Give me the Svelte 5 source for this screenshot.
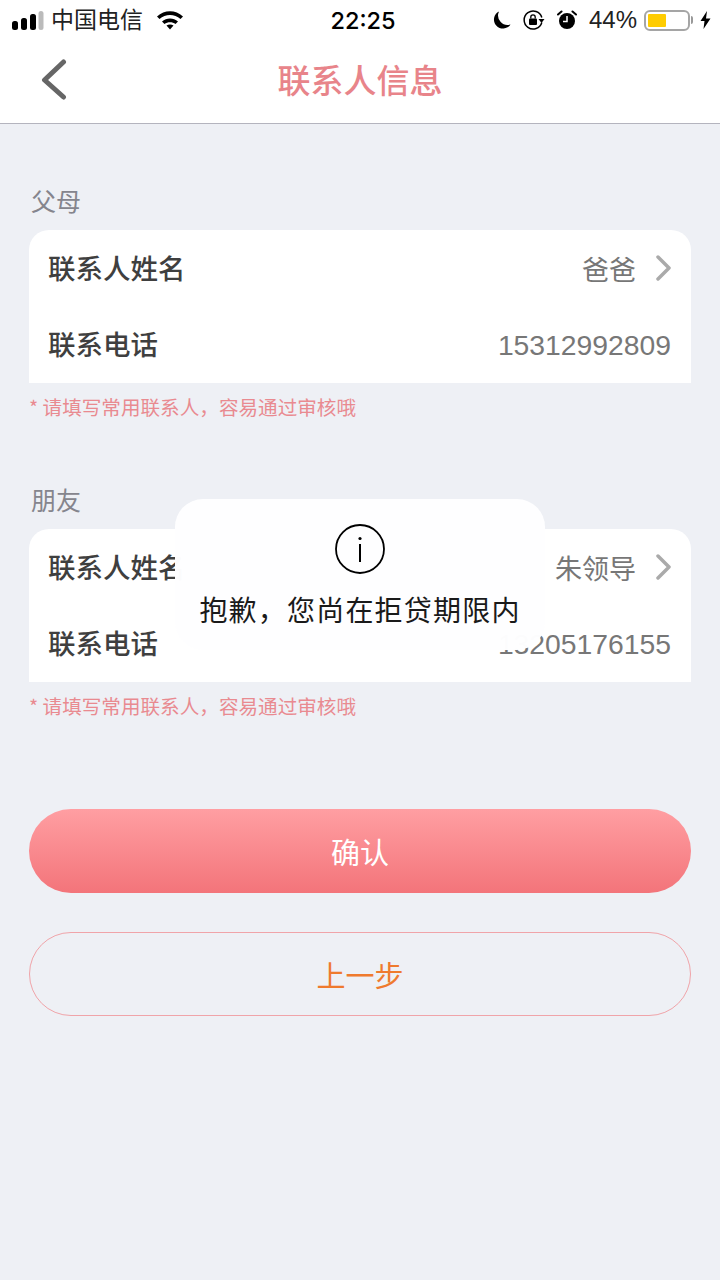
<script>
	const groups = [
		{ title: '父母', name: '爸爸', phone: '15312992809' },
		{ title: '朋友', name: '朱领导', phone: '13205176155' }
	];
</script>

<div class="page">
	<header class="status">
		<div class="side">
			<svg class="signal" width="32" height="19" viewBox="0 0 32 19">
				<rect x="0" y="10" width="6" height="9" rx="2.500" fill="#000" />
				<rect x="9" y="7" width="6" height="12" rx="2.500" fill="#000" />
				<rect x="18" y="3" width="6" height="16" rx="2.500" fill="#000" />
				<rect x="26.500" y="0" width="5" height="19" rx="2.500" fill="#bbb" />
			</svg>
			<span class="carrier">中国电信</span>
			<svg class="wifi" width="28" height="20" viewBox="0 0 28 20">
				<path d="M1 6.500C8.500 -0.500 19.500 -0.500 27 6.500L24.500 9C18.500 3.500 9.500 3.500 3.500 9Z" fill="#000" />
				<path d="M6 11.500C10.500 7.500 17.500 7.500 22 11.500L19.500 14C16.500 11.500 11.500 11.500 8.500 14Z" fill="#000" />
				<path d="M10.500 15.500C12.500 14 15.500 14 17.500 15.500L14 19.500Z" fill="#000" />
			</svg>
		</div>
		<span class="clock">22:25</span>
		<div class="side right">
			<svg width="19" height="19" viewBox="0 0 19 19">
				<path d="M7 0.500A9 9 0 1 0 18.500 13.500A9.500 9.500 0 0 1 7 0.500Z" fill="#000" />
			</svg>
			<svg class="lock" width="22" height="20" viewBox="0 0 22 20">
				<path d="M18.800 7.500A9 9 0 1 0 18.800 12.500" fill="none" stroke="#000" stroke-width="1.500" />
				<path d="M15.500 9L21.500 9L18.500 13Z" fill="#000" />
				<rect x="6" y="8.500" width="8" height="6.500" rx="1" fill="#000" />
				<path d="M7.800 8.500V7A2.200 2.200 0 0 1 12.200 7V8.500" fill="none" stroke="#000" stroke-width="1.300" />
			</svg>
			<svg class="alarm" width="20" height="20" viewBox="0 0 20 20">
				<circle cx="10" cy="11" r="8" fill="#000" />
				<path d="M1 4.500L4.500 1.500M19 4.500L15.500 1.500" stroke="#000" stroke-width="2" stroke-linecap="round" />
				<path d="M10 6V11.500H6" fill="none" stroke="#fff" stroke-width="1.500" />
			</svg>
			<span class="percent">44%</span>
			<div class="battery"><div class="level"></div></div>
			<span class="nub"></span>
			<svg class="bolt" width="11" height="18" viewBox="0 0 11 18">
				<path d="M7 0L0.500 10H4.500L3.500 18L10.500 7.500H6Z" fill="#000" />
			</svg>
		</div>
	</header>

	<nav class="nav">
		<svg class="back" width="28" height="42" viewBox="0 0 28 42">
			<path d="M23.500 3L4.500 21L23.500 38" fill="none" stroke="#666" stroke-width="5" stroke-linecap="round" stroke-linejoin="round" />
		</svg>
		<h1>联系人信息</h1>
	</nav>

	<main class="content">
		{#each groups as group}
			<section class="group">
				<div class="label">{group.title}</div>
				<div class="card">
					<div class="row">
						<span class="key">联系人姓名</span>
						<span class="value">{group.name}</span>
						<svg class="chevron" width="15" height="26" viewBox="0 0 15 26">
							<path d="M2 2L13 13L2 24" fill="none" stroke="#aaa" stroke-width="3.500" stroke-linecap="round" stroke-linejoin="round" />
						</svg>
					</div>
					<div class="row">
						<span class="key">联系电话</span>
						<span class="value digits">{group.phone}</span>
					</div>
				</div>
				<p class="hint">* 请填写常用联系人，容易通过审核哦</p>
			</section>
		{/each}

		<button class="btn primary">确认</button>
		<button class="btn ghost">上一步</button>
	</main>

	<div class="toast">
		<svg width="50" height="50" viewBox="0 0 50 50">
			<circle cx="25" cy="25" r="24" fill="none" stroke="#000" stroke-width="1.800" />
			<circle cx="25" cy="14.500" r="1.600" fill="#000" />
			<path d="M25 20V38" stroke="#000" stroke-width="2" />
		</svg>
		<div class="toast-text">抱歉，您尚在拒贷期限内</div>
	</div>
</div>

<style>
	:global(body) {
		margin: 0;
		background: #eef0f5;
	}

	.page {
		position: relative;
		height: 1280px;
		overflow: hidden;
		background: #eef0f5;
		font-family: "Liberation Sans", "Noto Sans CJK SC", sans-serif;
	}

	.status {
		position: relative;
		height: 40px;
		display: flex;
		align-items: center;
		justify-content: space-between;
		padding: 0 9px 0 12px;
		background: #fff;
		color: #000;
	}

	.side {
		display: flex;
		align-items: center;
	}

	.carrier {
		margin-left: 7px;
		font-size: 23px;
		line-height: 40px;
		color: #222;
	}

	.wifi {
		margin-left: 13px;
	}

	.clock {
		position: absolute;
		left: 6px;
		right: 0;
		text-align: center;
		font-size: 23.500px;
		font-weight: 500;
		font-family: Inter, sans-serif;
		pointer-events: none;
	}

	.lock {
		margin-left: 12px;
	}

	.alarm {
		margin-left: 12px;
	}

	.percent {
		margin-left: 12px;
		font-size: 24px;
		color: #222;
	}

	.battery {
		margin-left: 7px;
		width: 46px;
		height: 21px;
		box-sizing: border-box;
		border: 2px solid #a5a5a5;
		border-radius: 6px;
		padding: 2px;
		background: #fff;
	}

	.level {
		width: 18px;
		height: 13px;
		background: #fc0;
		border-radius: 1px;
	}

	.nub {
		width: 2px;
		height: 8px;
		margin-left: 1px;
		background: #999;
		border-radius: 0 3px 3px 0;
	}

	.bolt {
		margin-left: 7px;
	}

	.nav {
		height: 77px;
		padding-bottom: 6px;
		display: flex;
		align-items: center;
		justify-content: center;
		position: relative;
		background: #fff;
		border-bottom: 1px solid #b4b4be;
	}

	.back {
		position: absolute;
		left: 40px;
		top: 19px;
	}

	h1 {
		margin: 0;
		font-size: 33px;
		font-weight: 500;
		color: #e8848a;
		font-family: "Noto Sans CJK SC", sans-serif;
	}

	.content {
		padding: 0 29px;
		display: flex;
		flex-direction: column;
	}

	.group {
		height: 299px;
		padding-top: 60px;
		box-sizing: border-box;
	}

	.label {
		height: 46px;
		padding-left: 2px;
		font-size: 25px;
		line-height: 33px;
		color: #85858d;
		font-family: "Noto Sans CJK SC", sans-serif;
	}

	.card {
		height: 153px;
		padding: 0 20px;
		background: #fff;
		border-radius: 20px 20px 0 0;
		box-sizing: border-box;
	}

	.row {
		height: 76.500px;
		display: flex;
		align-items: center;
	}

	.key {
		flex: 1;
		margin-left: -1px;
		padding-bottom: 3px;
		font-size: 27.500px;
		font-weight: 500;
		color: #3f3f3f;
		font-family: "Noto Sans CJK SC", sans-serif;
	}

	.value {
		font-size: 27px;
		color: #777;
	}

	.digits {
		padding-top: 2px;
		font-size: 28.300px;
	}

	.chevron {
		margin-left: 20px;
	}

	.hint {
		margin: 12px 0 0;
		font-size: 19.600px;
		line-height: 24px;
		color: #e98a90;
		font-family: "Noto Sans CJK SC", sans-serif;
		white-space: nowrap;
	}

	.btn {
		display: block;
		width: 100%;
		height: 84px;
		padding: 0;
		border-radius: 42px;
		font-size: 29px;
		font-family: "Noto Sans CJK SC", sans-serif;
		font-weight: 400;
	}

	.primary {
		margin-top: 87px;
		border: none;
		color: #fff;
		background: linear-gradient(180deg, #ff9ea2 0%, #f3747a 100%);
	}

	.ghost {
		margin-top: 39px;
		border: 1px solid #f0a4a9;
		color: #ef7a2e;
		background: transparent;
	}

	.toast {
		position: absolute;
		left: 175px;
		top: 499px;
		width: 370px;
		height: 151px;
		box-sizing: border-box;
		padding-top: 25px;
		display: flex;
		flex-direction: column;
		align-items: center;
		border-radius: 28px;
		background: rgba(254, 254, 255, 0.985);
	}

	.toast-text {
		margin-top: 15px;
		font-size: 28px;
		line-height: 40px;
		letter-spacing: 1.200px;
		color: #1a1a1a;
		font-family: "Noto Sans CJK SC", sans-serif;
		white-space: nowrap;
	}
</style>
